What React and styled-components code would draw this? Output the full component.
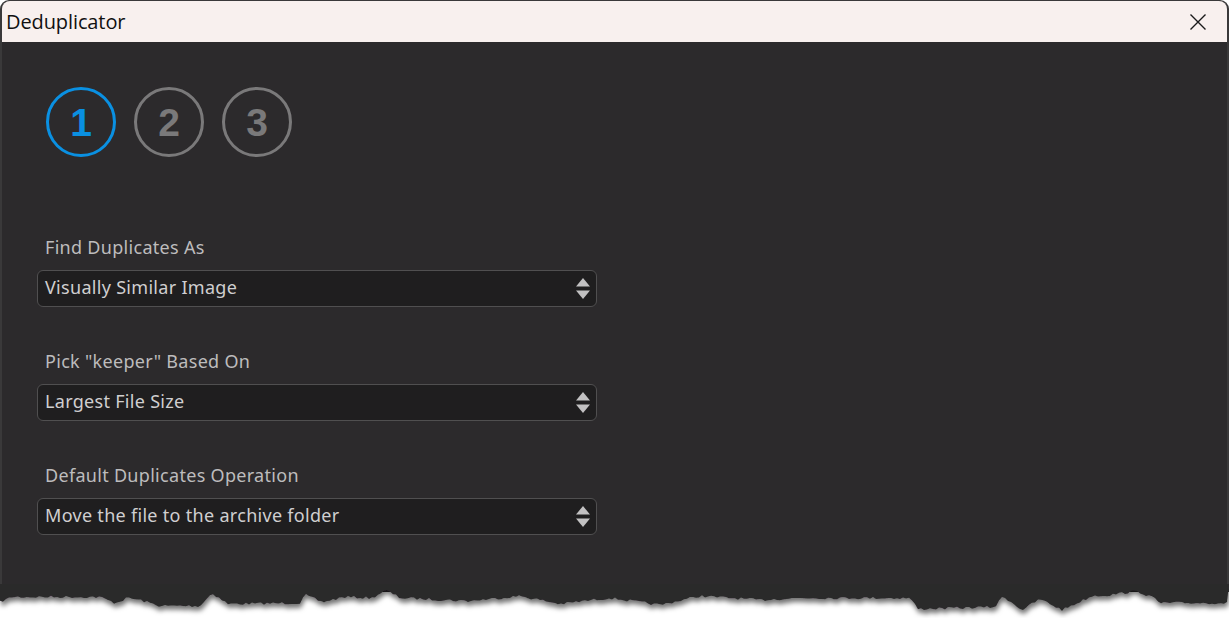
import React from 'react'
import styled, { createGlobalStyle } from 'styled-components'

const GlobalStyle = createGlobalStyle`
    *, *::before, *::after {
        box-sizing: border-box;
    }
    html, body {
        margin: 0;
        padding: 0;
        background: #ffffff;
    }
    body {
        font-family: "Noto Sans", "Open Sans", sans-serif;
    }
`

const Frame = styled.div`
    width: 1229px;
    height: 618px;
    display: flex;
    flex-direction: column;
    background: #ffffff;
    overflow: hidden;
`

const Window = styled.div`
    display: flex;
    flex-direction: column;
    flex-shrink: 0;
    background: #3a393a;
    padding: 1px 2px 0 2px;
    border-radius: 9px 9px 0 0;
`

const TitleBar = styled.div`
    height: 41px;
    display: flex;
    align-items: center;
    justify-content: space-between;
    background: #f8f0ee;
    border-radius: 8px 8px 0 0;
    padding: 0 20px 0 4px;
`

const Title = styled.span`
    font-family: "Open Sans", "Noto Sans", sans-serif;
    font-size: 20px;
    color: #111111;
    letter-spacing: -0.1px;
`

const Body = styled.div`
    height: 550px;
    background: #2c2a2c;
    padding: 45px 0 0 35px;
    display: flex;
    flex-direction: column;
`

const Steps = styled.div`
    display: flex;
    gap: 18px;
    margin-left: 9px;
`

const Step = styled.div`
    width: 70px;
    height: 70px;
    border-radius: 50%;
    border: 3px solid ${p => (p.$active ? '#0a90e2' : '#7a797a')};
    color: ${p => (p.$active ? '#0a90e2' : '#7a797a')};
    display: flex;
    align-items: center;
    justify-content: center;
    font-family: "Liberation Sans", Arial, sans-serif;
    font-weight: 700;
    font-size: 39px;
    line-height: 1;
`

const Form = styled.div`
    display: flex;
    flex-direction: column;
    gap: 43px;
    margin-top: 79px;
    width: 560px;
`

const Field = styled.div`
    display: flex;
    flex-direction: column;
    gap: 12px;
`

const Label = styled.label`
    font-size: 18px;
    line-height: 22px;
    letter-spacing: 0.3px;
    color: #bdbcbd;
    padding-left: 8px;
`

const SelectBox = styled.div`
    height: 37px;
    display: flex;
    align-items: center;
    justify-content: space-between;
    background: #1f1e1f;
    border: 1px solid #504f50;
    border-radius: 6px;
    padding: 0 5px 3px 7px;
    font-size: 18px;
    letter-spacing: 0.3px;
    color: #d0cfd0;
`

const ArrowWrap = styled.span`
    display: flex;
    padding-top: 3px;
`

const Arrows = () => (
    <ArrowWrap>
        <svg width="16" height="24" viewBox="0 0 16 24">
            <polygon points="8,1 15,9.5 1,9.5" fill="#c2c1c2" />
            <polygon points="1,13.5 15,13.5 8,22" fill="#c2c1c2" />
        </svg>
    </ArrowWrap>
)

const CloseIcon = () => (
    <svg width="18" height="18" viewBox="0 0 18 18">
        <path d="M1.5 1.5 L16.5 16.5 M16.5 1.5 L1.5 16.5" stroke="#1a1a1a" strokeWidth="1.4" />
    </svg>
)

// jagged edge where the screenshot was "torn"
const keys = [
    [0, 602], [12, 597], [100, 597], [115, 603], [128, 598], [140, 600], [160, 606],
    [200, 606], [212, 593], [228, 604], [300, 603], [305, 595], [322, 602], [345, 597],
    [372, 598], [386, 590], [400, 598], [470, 601], [520, 596], [560, 604], [610, 598],
    [660, 605], [700, 596], [760, 600], [800, 598], [910, 598], [918, 609], [995, 607],
    [1003, 596], [1022, 610], [1040, 599], [1062, 610], [1092, 596], [1110, 595],
    [1136, 591], [1152, 597], [1160, 603], [1229, 603],
]

const EDGE_TOP = 584

const makeEdge = () => {
    let seed = 7
    const rnd = () => {
        seed = (seed * 16807) % 2147483647
        return seed / 2147483647
    }
    const pts = []
    let k = 0
    for (let x = 0; x <= 1229; x += 3) {
        while (k < keys.length - 2 && keys[k + 1][0] < x) k++
        const [x0, y0] = keys[k]
        const [x1, y1] = keys[k + 1]
        const t = Math.min(1, Math.max(0, (x - x0) / (x1 - x0)))
        const y = y0 + (y1 - y0) * t + (rnd() - 0.5) * 2.6 - EDGE_TOP
        pts.push(`${x},${y.toFixed(1)}`)
    }
    return `0,0 ${pts.join(' ')} 1229,0`
}

const edgePoints = makeEdge()

const TornEdge = () => (
    <svg width="1229" height="34" viewBox="0 0 1229 34" style={{ display: 'block' }}>
        <defs>
            <filter id="tornShadow" x="-5%" y="-50%" width="110%" height="200%">
                <feDropShadow dx="1" dy="4" stdDeviation="2.6" floodColor="#000" floodOpacity="0.55" />
            </filter>
        </defs>
        <polygon points={edgePoints} fill="#2c2a2c" filter="url(#tornShadow)" />
    </svg>
)

const EdgeWrap = styled.div`
    margin-top: -8px;
    flex-shrink: 0;
`

const fields = [
    { label: 'Find Duplicates As', value: 'Visually Similar Image' },
    { label: 'Pick "keeper" Based On', value: 'Largest File Size' },
    { label: 'Default Duplicates Operation', value: 'Move the file to the archive folder' },
]

const App = () => {
    return (
        <Frame>
            <GlobalStyle />
            <Window>
                <TitleBar>
                    <Title>Deduplicator</Title>
                    <CloseIcon />
                </TitleBar>
                <Body>
                    <Steps>
                        <Step $active>1</Step>
                        <Step>2</Step>
                        <Step>3</Step>
                    </Steps>
                    <Form>
                        {fields.map(f => (
                            <Field key={f.label}>
                                <Label>{f.label}</Label>
                                <SelectBox>
                                    <span>{f.value}</span>
                                    <Arrows />
                                </SelectBox>
                            </Field>
                        ))}
                    </Form>
                </Body>
            </Window>
            <EdgeWrap>
                <TornEdge />
            </EdgeWrap>
        </Frame>
    )
}

export default App
